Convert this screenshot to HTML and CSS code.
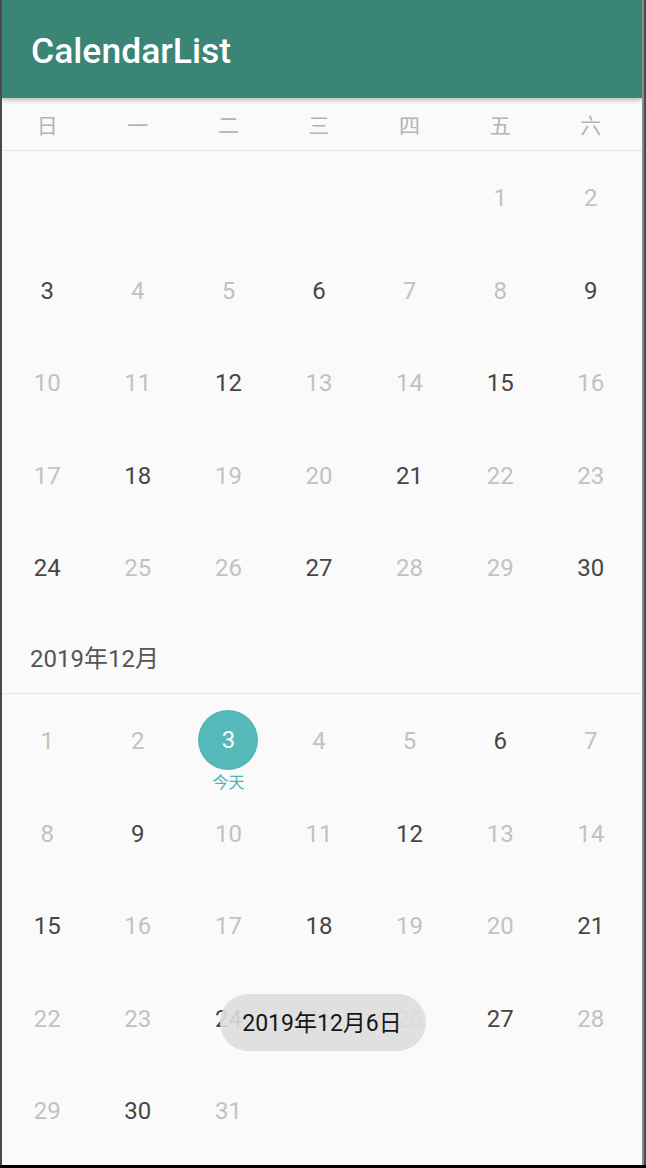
FILE: index.html
```html
<!DOCTYPE html>
<html lang="zh">
<head>
<meta charset="utf-8">
<title>CalendarList</title>
<link rel="stylesheet" href="styles.css">
</head>
<body>
<div class="frame">
  <div class="screen">
    <header class="appbar"><h1 class="title">CalendarList</h1></header>
    <div class="weekdays">
      <span>日</span><span>一</span><span>二</span><span>三</span><span>四</span><span>五</span><span>六</span>
    </div>
    <section class="month">
      <div class="grid">
        <span class="day"></span><span class="day"></span><span class="day"></span><span class="day"></span><span class="day"></span>
        <span class="day">1</span><span class="day">2</span>
        <span class="day dark">3</span><span class="day">4</span><span class="day">5</span><span class="day dark">6</span><span class="day">7</span><span class="day">8</span><span class="day dark">9</span>
        <span class="day">10</span><span class="day">11</span><span class="day dark">12</span><span class="day">13</span><span class="day">14</span><span class="day dark">15</span><span class="day">16</span>
        <span class="day">17</span><span class="day dark">18</span><span class="day">19</span><span class="day">20</span><span class="day dark">21</span><span class="day">22</span><span class="day">23</span>
        <span class="day dark">24</span><span class="day">25</span><span class="day">26</span><span class="day dark">27</span><span class="day">28</span><span class="day">29</span><span class="day dark">30</span>
      </div>
    </section>
    <div class="month-label">2019年12月</div>
    <section class="month">
      <div class="grid">
        <span class="day">1</span><span class="day">2</span>
        <span class="day today"><span class="circle">3</span><span class="today-label">今天</span></span>
        <span class="day">4</span><span class="day">5</span><span class="day dark">6</span><span class="day">7</span>
        <span class="day">8</span><span class="day dark">9</span><span class="day">10</span><span class="day">11</span><span class="day dark">12</span><span class="day">13</span><span class="day">14</span>
        <span class="day dark">15</span><span class="day">16</span><span class="day">17</span><span class="day dark">18</span><span class="day">19</span><span class="day">20</span><span class="day dark">21</span>
        <span class="day">22</span><span class="day">23</span><span class="day dark">24</span><span class="day">25</span><span class="day">26</span><span class="day dark">27</span><span class="day">28</span>
        <span class="day">29</span><span class="day dark">30</span><span class="day">31</span>
      </div>
    </section>
    <div class="toast">2019年12月6日</div>
  </div>
</div>
</body>
</html>
```
FILE: styles.css
```css
html, body {
  margin: 0;
  padding: 0;
}
body {
  background: #000;
  height: 1168px;
  overflow: hidden;
  font-family: Roboto, "Noto Sans CJK SC", sans-serif;
}
.frame {
  height: 1165px;
  display: flex;
  background: #4a4a4a;
}
.screen {
  width: 640px;
  margin-left: 2px;
  border-right: 2px solid #8c8c8c;
  background: #fafafa;
  position: relative;
  overflow: hidden;
}
.appbar {
  position: relative;
  z-index: 2;
  height: 98px;
  background: #3a8576;
  box-shadow: 0 2px 5px rgba(0, 0, 0, 0.28);
  display: flex;
  align-items: center;
  padding: 3px 0 0 29px;
  box-sizing: border-box;
}
.title {
  margin: 0;
  color: #fff;
  font-family: Roboto, sans-serif;
  font-weight: 500;
  font-size: 35.5px;
  line-height: 40px;
}
.weekdays {
  display: grid;
  grid-template-columns: repeat(7, 1fr);
  padding-right: 6px;
  border-bottom: 1px solid #e4e4e4;
  box-sizing: border-box;
  height: 53px;
  align-items: center;
  font-family: "Noto Sans CJK SC", sans-serif;
  font-size: 21px;
  color: #b4b4b4;
  text-align: center;
}
.grid {
  display: grid;
  grid-template-columns: repeat(7, 1fr);
  grid-auto-rows: 92.5px;
  padding-right: 6px;
}
.day {
  position: relative;
  display: flex;
  align-items: center;
  justify-content: center;
  font-size: 24px;
  color: #c2c2c2;
  padding-top: 2px;
}
.month:last-of-type .day {
  padding-top: 3px;
}
.day.dark {
  color: #464646;
}
.month-label {
  height: 80px;
  box-sizing: border-box;
  padding: 7px 0 0 28px;
  border-bottom: 1px solid #e6e6e6;
  display: flex;
  align-items: center;
  font-size: 24px;
  color: #555;
}
.month:last-of-type .day.today {
  padding-top: 0;
}
.circle {
  width: 60px;
  height: 60px;
  border-radius: 50%;
  background: #55b8b9;
  color: #fff;
  display: flex;
  align-items: center;
  justify-content: center;
  padding-top: 1px;
  box-sizing: border-box;
}
.today-label {
  position: absolute;
  left: 0;
  right: 0;
  top: calc(50% + 30px);
  text-align: center;
  font-family: "Noto Sans CJK SC", sans-serif;
  font-size: 16px;
  line-height: 22px;
  color: #4cb4b5;
}
.toast {
  position: absolute;
  left: 218px;
  top: 994px;
  width: 206px;
  height: 57px;
  border-radius: 29px;
  background: rgba(221, 221, 221, 0.9);
  color: #151515;
  font-size: 23px;
  display: flex;
  align-items: center;
  justify-content: center;
  padding: 0 2px 3px 0;
  box-sizing: border-box;
}
```
